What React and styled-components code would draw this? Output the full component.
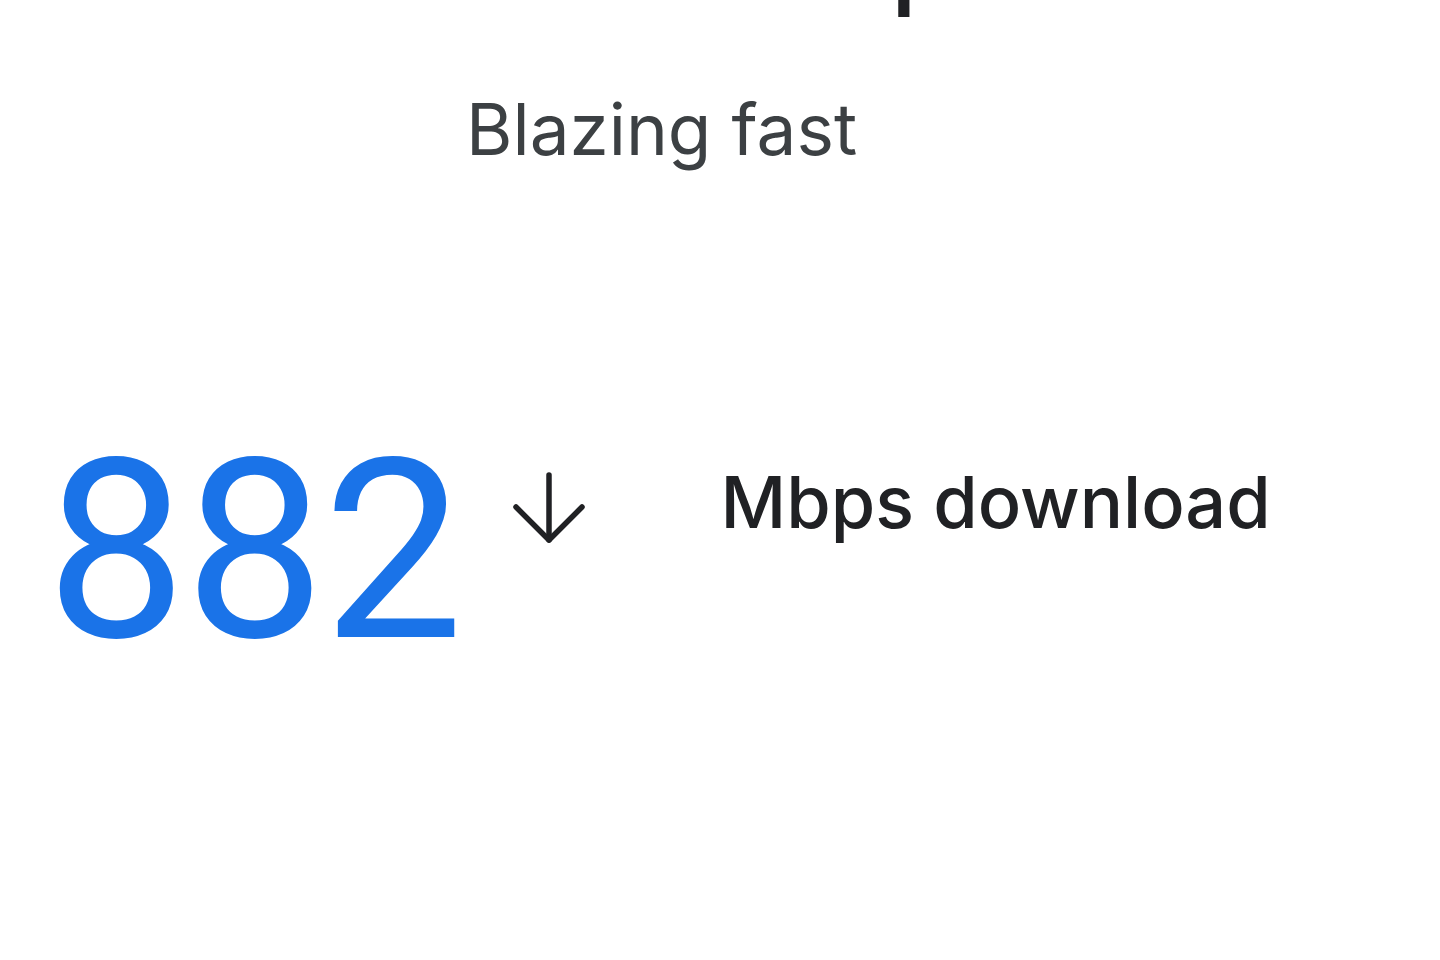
import React from 'react'
import styled, { createGlobalStyle } from 'styled-components'

const GlobalStyle = createGlobalStyle`
  html, body {
    margin: 0;
    padding: 0;
    background: #ffffff;
    overflow: hidden;
  }
  body {
    font-family: Inter, Roboto, "Liberation Sans", Arial, sans-serif;
  }
`

const Page = styled.main`
  width: 1440px;
  height: 960px;
  display: flex;
  flex-direction: column;
`

// the page title sits above the visible area, only its descender peeks in
const Heading = styled.h1`
  margin: -94px 0 0 420px;
  font-size: 104px;
  line-height: 1;
  font-weight: 500;
  color: #202124;
  white-space: nowrap;
`

const Subtitle = styled.p`
  margin: 83px 0 0 ${p => p.$indent}px;
  font-size: 71px;
  line-height: 72px;
  font-weight: 400;
  color: #3c4043;
`

const StatRow = styled.section`
  display: flex;
  align-items: flex-start;
  margin-top: 262px;
  padding-left: 46px;
`

const Value = styled.span`
  font-family: Roboto, "Liberation Sans", Arial, sans-serif;
  font-size: 250px;
  line-height: 1;
  font-weight: 400;
  color: #1a73e8;
  letter-spacing: -2px;
`

const Arrow = styled.svg`
  width: 72px;
  height: 72px;
  margin: 45px 0 0 51px;
  flex-shrink: 0;
`

const Unit = styled.span`
  margin: 39px 0 0 136px;
  font-size: 72px;
  line-height: 1;
  font-weight: 500;
  color: #202124;
`

export default function App() {
  return (
    <>
      <GlobalStyle />
      <Page>
        <Heading>Internet speed</Heading>
        <Subtitle $indent={466}>Blazing fast</Subtitle>
        <StatRow>
          <Value>882</Value>
          <Arrow viewBox="0 0 72 72" fill="none" stroke="#202124" strokeWidth="5.5" strokeLinecap="round" strokeLinejoin="round">
            <path d="M36 3V68" />
            <path d="M3 35L36 68L69 35" />
          </Arrow>
          <Unit>Mbps download</Unit>
        </StatRow>
      </Page>
    </>
  )
}
